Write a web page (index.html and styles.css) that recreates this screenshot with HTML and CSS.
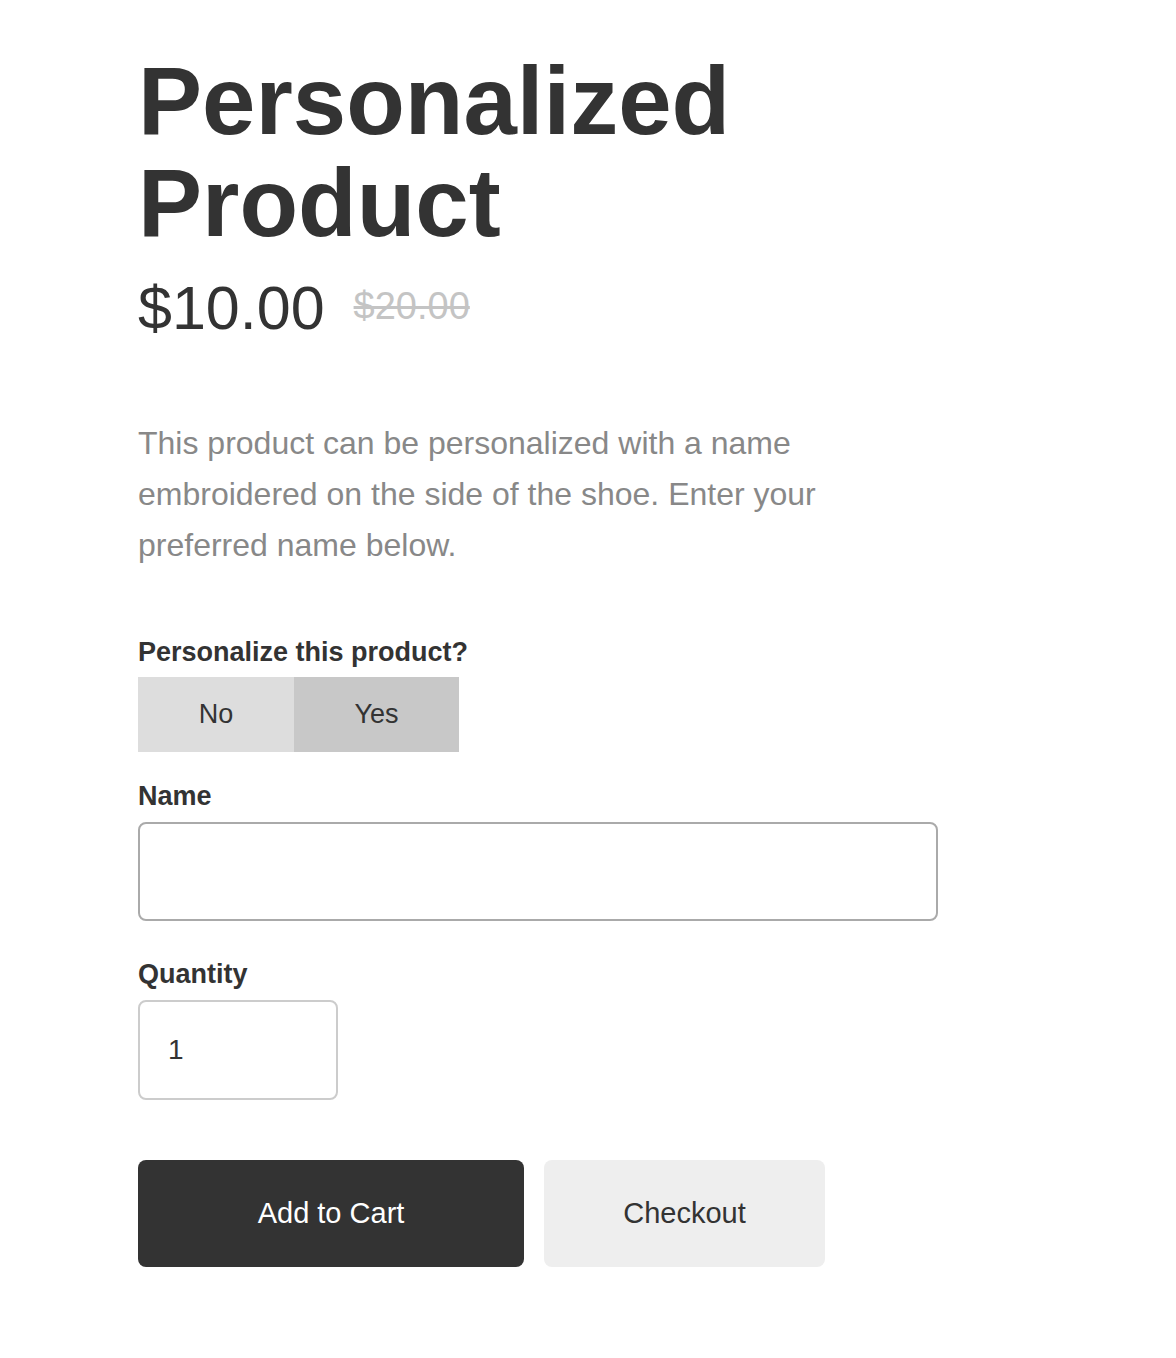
FILE: index.html
```html
<!DOCTYPE html>
<html lang="en">
<head>
<meta charset="utf-8">
<title>Personalized Product</title>
<link rel="stylesheet" href="styles.css">
</head>
<body>
<main class="product">
  <h1 class="title">Personalized Product</h1>
  <div class="price-row">
    <span class="price">$10.00</span>
    <span class="old-price">$20.00</span>
  </div>
  <p class="desc">This product can be personalized with a name embroidered on the side of the shoe. Enter your preferred name below.</p>

  <div class="field field-toggle">
    <div class="label">Personalize this product?</div>
    <div class="toggle">
      <button class="toggle-btn no" type="button">No</button>
      <button class="toggle-btn yes" type="button">Yes</button>
    </div>
  </div>

  <div class="field field-name">
    <label class="label" for="name">Name</label>
    <input class="input name-input" id="name" type="text">
  </div>

  <div class="field field-qty">
    <label class="label" for="qty">Quantity</label>
    <input class="input qty-input" id="qty" type="text" value="1">
  </div>

  <div class="actions">
    <button class="btn btn-primary" type="button">Add to Cart</button>
    <button class="btn btn-secondary" type="button">Checkout</button>
  </div>
</main>
</body>
</html>
```

FILE: styles.css
```css
* { box-sizing: border-box; }
html, body { margin: 0; padding: 0; background: #fff; }
body {
  font-family: "Liberation Sans", Arial, Helvetica, sans-serif;
  color: #333;
}
.product {
  padding: 50px 0 60px 138px;
  width: 938px;
}
.title {
  margin: 0;
  font-size: 96px;
  line-height: 102px;
  font-weight: 700;
  color: #333;
  width: 700px;
}
.price-row {
  display: flex;
  align-items: center;
  gap: 29px;
  margin-top: 18px;
}
.price {
  font-size: 61px;
  line-height: 72px;
  color: #333;
}
.old-price {
  font-size: 38px;
  line-height: 44px;
  color: #c4c4c4;
  text-decoration: line-through;
  margin-bottom: 4px;
}
.desc {
  margin: 74px 0 0;
  max-width: 800px;
  font-size: 32px;
  line-height: 51px;
  color: #888;
}
.field { display: flex; flex-direction: column; align-items: flex-start; }
.field-toggle { margin-top: 63px; }
.field-name { margin-top: 26px; }
.field-qty { margin-top: 35px; }
.label {
  font-size: 27px;
  line-height: 36px;
  font-weight: 700;
  color: #333;
  margin-bottom: 8px;
}
.field-toggle .label { margin-bottom: 7px; }
.toggle { display: flex; }
.toggle-btn {
  font-family: inherit;
  font-size: 27px;
  color: #333;
  border: 0;
  height: 75px;
  padding: 0;
  margin: 0;
}
.toggle-btn.no { width: 156px; background: #dddddd; }
.toggle-btn.yes { width: 165px; background: #c8c8c8; }
.input {
  font-family: inherit;
  font-size: 28px;
  color: #333;
  background: #fff;
  border-radius: 8px;
  padding: 0 28px;
  margin: 0;
  outline: none;
}
.name-input { width: 800px; height: 99px; border: 2px solid #aaaaaa; }
.qty-input { width: 200px; height: 100px; border: 2px solid #cccccc; }
.actions {
  display: flex;
  gap: 20px;
  margin-top: 60px;
}
.btn {
  font-family: inherit;
  font-size: 29px;
  height: 107px;
  border: 0;
  border-radius: 8px;
  padding: 0;
}
.btn-primary { width: 386px; background: #333; color: #fff; }
.btn-secondary { width: 281px; background: #eeeeee; color: #333; }
```
